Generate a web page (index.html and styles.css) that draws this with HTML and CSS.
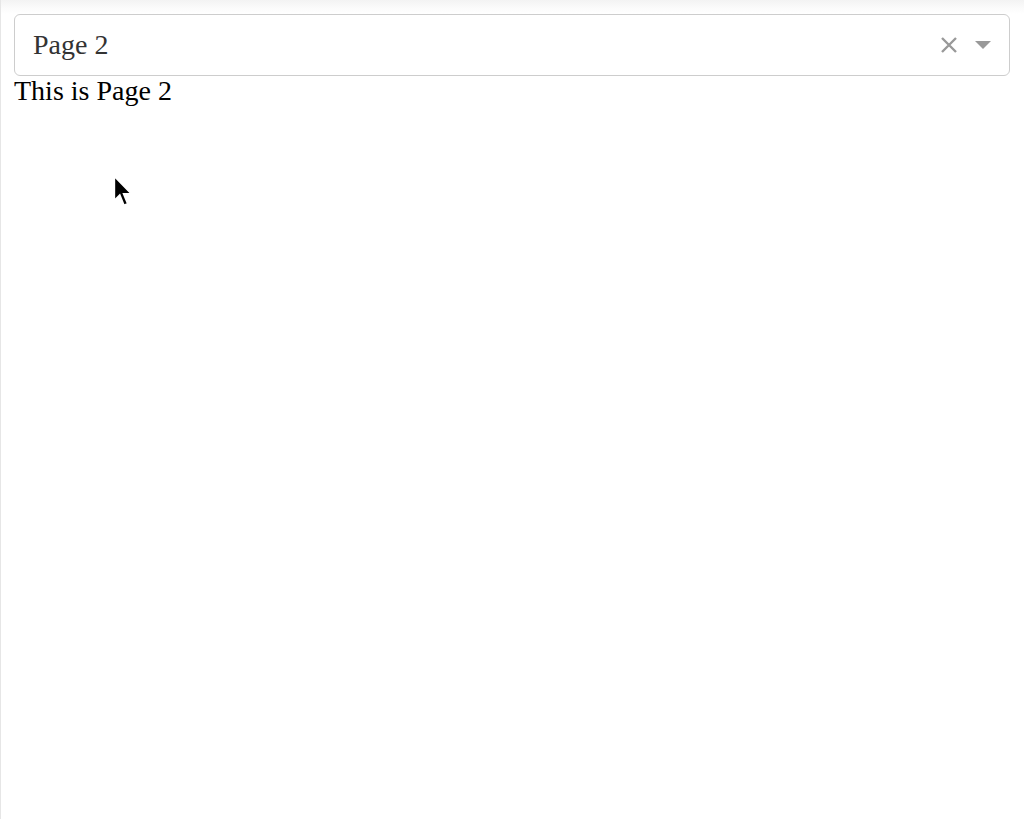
FILE: index.html
```html
<!DOCTYPE html>
<html lang="en">
<head>
    <meta charset="UTF-8">
    <title>Page 2</title>
    <link rel="stylesheet" href="styles.css">
</head>
<body>
    <div class="page">
        <div class="select">
            <div class="select-value">Page 2</div>
            <div class="select-icons">
                <span class="clear">
                    <svg width="18" height="18" viewBox="0 0 18 18">
                        <path d="M2 2 L16 16 M16 2 L2 16" stroke="#999" stroke-width="2.4" fill="none"/>
                    </svg>
                </span>
                <span class="arrow">
                    <svg width="16" height="8" viewBox="0 0 16 8">
                        <path d="M0 0 H16 L8 8 Z" fill="#999"/>
                    </svg>
                </span>
            </div>
        </div>
        <div class="content">This is Page 2</div>
    </div>
    <!-- mouse pointer caught in the shot -->
    <svg class="cursor" width="24" height="34" viewBox="0 0 20 28">
        <path d="M2 1 L2 21 L6.5 16.5 L10 25 L13 23.8 L9.6 15.5 L16 15.5 Z" fill="#000" stroke="#fff" stroke-width="1.3"/>
    </svg>
</body>
</html>
```

FILE: styles.css
```css
html, body {
    margin: 0;
    height: 100%;
    background: #fff;
}
body {
    font-family: "Liberation Serif", "Times New Roman", serif;
    border-left: 1px solid #e6e6e6;
    box-sizing: border-box;
    position: relative;
    background: linear-gradient(to bottom, #f3f3f3 0, #fbfbfb 8px, #fff 14px) no-repeat;
}
.page {
    padding: 14px 14px 0 13px;
}
.select {
    display: flex;
    align-items: center;
    height: 62px;
    box-sizing: border-box;
    border: 1px solid #cdcdcd;
    border-radius: 6px;
    background: #fff;
    padding: 0 18px 0 18px;
}
.select-value {
    flex: 1;
    font-size: 28px;
    color: #333;
}
.select-icons {
    display: flex;
    align-items: center;
    gap: 17px;
}
.clear, .arrow {
    display: flex;
}
.content {
    font-size: 28px;
    line-height: 30px;
    color: #000;
}
.cursor {
    position: absolute;
    left: 111px;
    top: 175px;
}
```
